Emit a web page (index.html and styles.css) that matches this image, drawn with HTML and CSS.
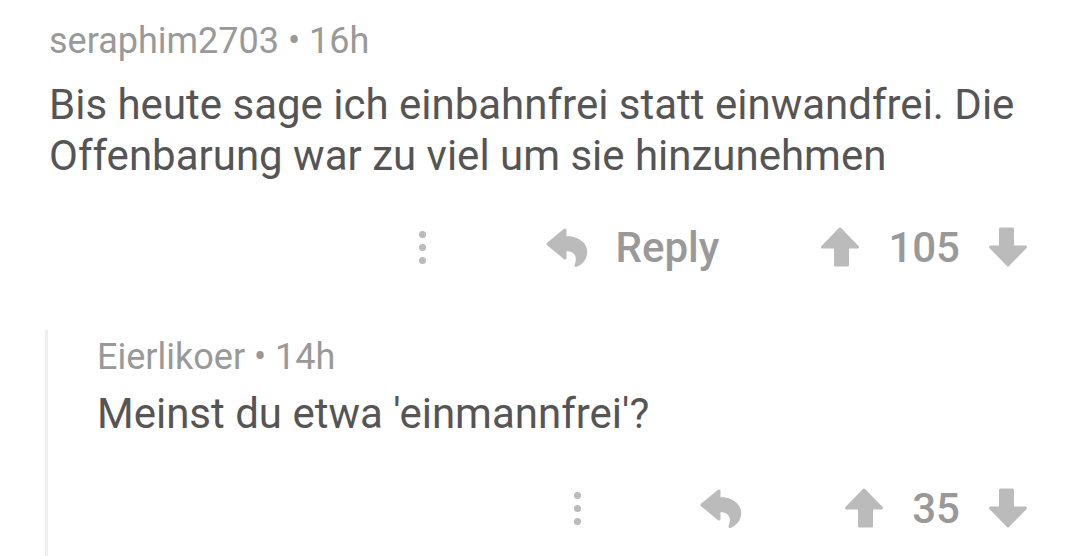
FILE: index.html
```html
<!DOCTYPE html>
<html>
<head>
<meta charset="utf-8">
<link rel="stylesheet" href="styles.css">
</head>
<body>
<div class="thread">
  <div class="comment top">
    <div class="meta">seraphim2703 • 16h</div>
    <div class="body">Bis heute sage ich einbahnfrei statt einwandfrei. Die Offenbarung war zu viel um sie hinzunehmen</div>
    <div class="actions">
      <span class="more"><i></i><i></i><i></i></span>
      <span class="reply">
        <svg class="reply-icon" viewBox="0 0 44 40"><path d="M3 17 L20 3 L20 10.5 C34 10.5 42 18 40.5 27.5 C39.5 33 36 36.5 31 38.5 C34 31 32.5 22.5 20 22.5 L20 31 Z"/></svg>
        <span class="reply-label">Reply</span>
      </span>
      <span class="vote">
        <svg class="arrow" viewBox="0 0 40 40"><path d="M20 2 L37.5 20 L27.5 20 L27.5 38 L15.5 38 L15.5 20 L2.5 20 Z"/></svg>
        <span class="count">105</span>
        <svg class="arrow down" viewBox="0 0 40 40"><path d="M20 2 L37.5 20 L27.5 20 L27.5 38 L15.5 38 L15.5 20 L2.5 20 Z"/></svg>
      </span>
    </div>
  </div>
  <div class="comment child">
    <div class="meta">Eierlikoer • 14h</div>
    <div class="body">Meinst du etwa 'einmannfrei'?</div>
    <div class="actions">
      <span class="more"><i></i><i></i><i></i></span>
      <span class="reply">
        <svg class="reply-icon" viewBox="0 0 44 40"><path d="M3 17 L20 3 L20 10.5 C34 10.5 42 18 40.5 27.5 C39.5 33 36 36.5 31 38.5 C34 31 32.5 22.5 20 22.5 L20 31 Z"/></svg>
      </span>
      <span class="vote">
        <svg class="arrow" viewBox="0 0 40 40"><path d="M20 2 L37.5 20 L27.5 20 L27.5 38 L15.5 38 L15.5 20 L2.5 20 Z"/></svg>
        <span class="count">35</span>
        <svg class="arrow down" viewBox="0 0 40 40"><path d="M20 2 L37.5 20 L27.5 20 L27.5 38 L15.5 38 L15.5 20 L2.5 20 Z"/></svg>
      </span>
    </div>
  </div>
</div>
</body>
</html>
```

FILE: styles.css
```css
html, body {
  margin: 0;
  padding: 0;
  background: #ffffff;
  width: 1080px;
  height: 556px;
  overflow: hidden;
  font-family: Roboto, "Liberation Sans", sans-serif;
}

.thread {
  padding: 21px 52px 0 0;
}

.comment.top {
  padding-left: 49px;
}

.comment.child {
  box-sizing: border-box;
  height: 226px;
  margin-left: 45px;
  margin-top: 53px;
  border-left: 3px solid #efefef;
  padding-left: 49px;
  padding-top: 7px;
}

.meta {
  font-size: 36px;
  line-height: 40px;
  color: #999999;
}

.body {
  font-size: 42px;
  line-height: 51px;
  color: #555555;
  margin-top: 18px;
}

.child .body {
  margin-top: 11px;
}

.actions {
  display: flex;
  justify-content: flex-end;
  align-items: center;
  height: 60px;
  margin-top: 36px;
}

.child .actions {
  margin-top: 39px;
}

.more {
  display: flex;
  flex-direction: column;
  gap: 6px;
  width: 8px;
  align-items: center;
}

.more i {
  display: block;
  width: 7px;
  height: 7px;
  border-radius: 50%;
  background: #bbbbbb;
}

.reply {
  display: flex;
  align-items: center;
  gap: 27px;
  margin-left: 118px;
}

.reply-icon {
  width: 44px;
  height: 40px;
  fill: #bbbbbb;
  stroke: #bbbbbb;
  stroke-width: 3;
  stroke-linejoin: round;
}

.reply-label {
  font-size: 42px;
  font-weight: 500;
  color: #999999;
}

.vote {
  display: flex;
  align-items: center;
  gap: 28px;
  margin-left: 101px;
}

.arrow {
  width: 40px;
  height: 40px;
  fill: #bbbbbb;
  stroke: #bbbbbb;
  stroke-width: 3;
  stroke-linejoin: round;
}

.arrow.down {
  transform: rotate(180deg);
}

.count {
  font-size: 42px;
  font-weight: 500;
  color: #999999;
}
```
